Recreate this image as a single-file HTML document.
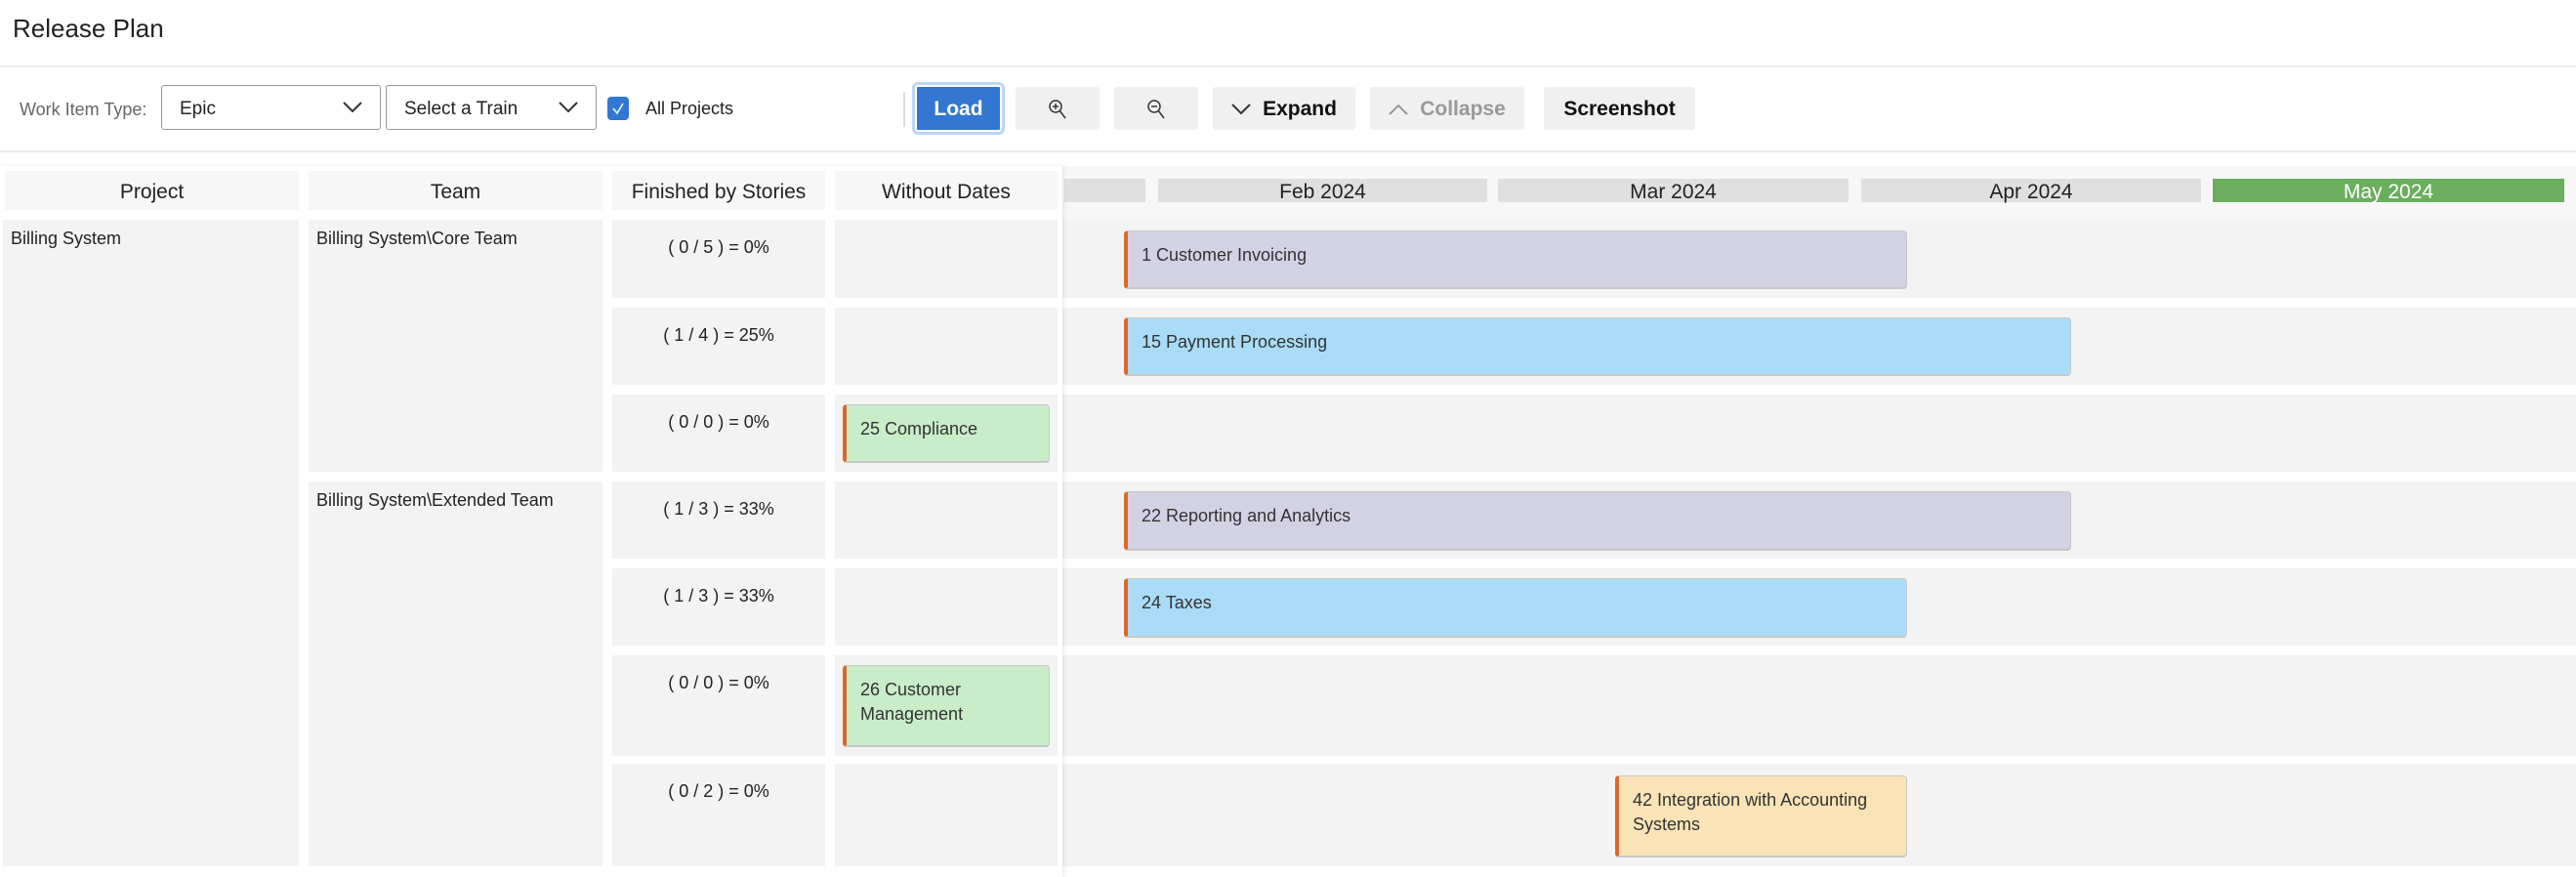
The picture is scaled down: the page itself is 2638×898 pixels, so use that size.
<!DOCTYPE html>
<html><head><meta charset="utf-8"><style>
*{box-sizing:border-box;margin:0;padding:0}
body{width:2638px;height:898px;background:#fff;font-family:"Liberation Sans",Arial,sans-serif;color:#222;position:relative;overflow:hidden}
.a{position:absolute}
.btn{position:absolute;top:89px;height:44px;background:#f0f0f0;border-radius:3px;font-size:21px;font-weight:bold;display:flex;align-items:center;justify-content:center;color:#111;padding-top:2px}
.sel{position:absolute;top:87px;height:46px;border:1.5px solid #999;border-radius:3px;font-size:19px;padding-left:18px;padding-top:4px;display:flex;align-items:center}
.cell{position:absolute;background:#f3f3f3;font-size:18px}
.hd{position:absolute;background:#f7f7f7;font-size:21px;display:flex;align-items:center;justify-content:center;top:175px;height:40px;padding-top:3px}
.mo{position:absolute;top:183px;height:24px;background:#e0e0e0;font-size:21px;display:flex;align-items:center;justify-content:center;padding-top:3px}
.bar{position:absolute;border-left:4px solid #d9692a;border-radius:4px;font-size:18px;padding:12px 0 0 14px;line-height:25px;border-top:1px solid #c8c8c8;border-right:1px solid #c8c8c8;border-bottom:2px solid #c8c8c8;color:#333}
.fin{text-align:center;padding-top:18px}
</style></head><body>
<div class="a" style="left:13px;top:14px;font-size:26px">Release Plan</div>
<div class="a" style="left:0;top:67px;width:2638px;height:2px;background:#ebebeb"></div>
<div class="a" style="left:20px;top:102px;font-size:18px;color:#666">Work Item Type:</div>
<div class="sel" style="left:165px;width:225px">Epic<svg class="a" style="right:18px;top:16px" width="20" height="12"><path d="M1 1L10 10L19 1" fill="none" stroke="#333" stroke-width="2"/></svg></div>
<div class="sel" style="left:395px;width:216px">Select a Train<svg class="a" style="right:18px;top:16px" width="20" height="12"><path d="M1 1L10 10L19 1" fill="none" stroke="#333" stroke-width="2"/></svg></div>
<div class="a" style="left:622px;top:99px;width:22px;height:24px;background:#3277d1;border-radius:4px"><svg width="22" height="24"><path d="M6 12L10 17L16 7" fill="none" stroke="#fff" stroke-width="1.5"/></svg></div>
<div class="a" style="left:661px;top:101px;font-size:18px">All Projects</div>
<div class="a" style="left:925px;top:94px;width:2px;height:36px;background:#ddd"></div>
<div class="btn" style="left:937px;top:87px;width:89px;height:48px;background:#3277d1;color:#fff;border:2px solid #fff;box-shadow:0 0 0 3px #bcd6f5">Load</div>
<div class="btn" style="left:1040px;width:86px"><svg width="20" height="22"><circle cx="8" cy="8" r="6" fill="none" stroke="#333" stroke-width="1.5"/><path d="M12 12L18 20M5 8H11M8 5V11" stroke="#333" stroke-width="1.5"/></svg></div>
<div class="btn" style="left:1141px;width:86px"><svg width="20" height="22"><circle cx="8" cy="8" r="6" fill="none" stroke="#333" stroke-width="1.5"/><path d="M12 12L18 20M5 8H11" stroke="#333" stroke-width="1.5"/></svg></div>
<div class="btn" style="left:1242px;width:146px"><svg width="20" height="12" style="margin-right:12px"><path d="M1 1L10 10L19 1" fill="none" stroke="#333" stroke-width="2"/></svg>Expand</div>
<div class="btn" style="left:1403px;width:158px;color:#999"><svg width="20" height="12" style="margin-right:12px"><path d="M1 11L10 2L19 11" fill="none" stroke="#999" stroke-width="2"/></svg>Collapse</div>
<div class="btn" style="left:1581px;width:155px">Screenshot</div>
<div class="a" style="left:0;top:154px;width:2638px;height:2px;background:#ebebeb"></div>

<div class="a" style="left:1088px;top:170px;width:1550px;height:55px;background:#f7f7f7"></div>
<div class="mo" style="left:1090px;width:83px"></div>
<div class="mo" style="left:1186px;width:337px">Feb 2024</div>
<div class="mo" style="left:1534px;width:359px">Mar 2024</div>
<div class="mo" style="left:1906px;width:348px">Apr 2024</div>
<div class="mo" style="left:2266px;width:360px;background:#6aae5e;color:#fff">May 2024</div>

<div class="cell" style="left:1088px;top:225px;width:1550px;height:80px"></div>
<div class="cell" style="left:1088px;top:315px;width:1550px;height:79px"></div>
<div class="cell" style="left:1088px;top:404px;width:1550px;height:79px"></div>
<div class="cell" style="left:1088px;top:493px;width:1550px;height:79px"></div>
<div class="cell" style="left:1088px;top:582px;width:1550px;height:79px"></div>
<div class="cell" style="left:1088px;top:671px;width:1550px;height:103px"></div>
<div class="cell" style="left:1088px;top:782px;width:1550px;height:105px"></div>

<div class="a" style="left:0;top:170px;width:1088px;height:728px;background:#fff;box-shadow:2px 0 4px rgba(0,0,0,.08)"></div>
<div class="hd" style="left:5px;width:301px">Project</div>
<div class="hd" style="left:316px;width:301px">Team</div>
<div class="hd" style="left:627px;width:218px">Finished by Stories</div>
<div class="hd" style="left:855px;width:228px">Without Dates</div>

<div class="cell" style="left:3px;top:225px;width:303px;height:662px;padding:9px 8px">Billing System</div>
<div class="cell" style="left:316px;top:225px;width:301px;height:258px;padding:9px 8px">Billing System\Core Team</div>
<div class="cell" style="left:316px;top:493px;width:301px;height:394px;padding:9px 8px">Billing System\Extended Team</div>

<div class="cell fin" style="left:627px;top:225px;width:218px;height:80px">( 0 / 5 ) = 0%</div>
<div class="cell fin" style="left:627px;top:315px;width:218px;height:79px">( 1 / 4 ) = 25%</div>
<div class="cell fin" style="left:627px;top:404px;width:218px;height:79px">( 0 / 0 ) = 0%</div>
<div class="cell fin" style="left:627px;top:493px;width:218px;height:79px">( 1 / 3 ) = 33%</div>
<div class="cell fin" style="left:627px;top:582px;width:218px;height:79px">( 1 / 3 ) = 33%</div>
<div class="cell fin" style="left:627px;top:671px;width:218px;height:103px">( 0 / 0 ) = 0%</div>
<div class="cell fin" style="left:627px;top:782px;width:218px;height:105px">( 0 / 2 ) = 0%</div>

<div class="cell" style="left:855px;top:225px;width:228px;height:80px"></div>
<div class="cell" style="left:855px;top:315px;width:228px;height:79px"></div>
<div class="cell" style="left:855px;top:404px;width:228px;height:79px"></div>
<div class="cell" style="left:855px;top:493px;width:228px;height:79px"></div>
<div class="cell" style="left:855px;top:582px;width:228px;height:79px"></div>
<div class="cell" style="left:855px;top:671px;width:228px;height:103px"></div>
<div class="cell" style="left:855px;top:782px;width:228px;height:105px"></div>

<div class="bar" style="left:863px;top:414px;width:212px;height:60px;background:#c9edc8">25 Compliance</div>
<div class="bar" style="left:863px;top:681px;width:212px;height:84px;background:#c9edc8">26 Customer<br>Management</div>
<div class="bar" style="left:1151px;top:236px;width:802px;height:60px;background:#d3d2e4">1 Customer Invoicing</div>
<div class="bar" style="left:1151px;top:325px;width:970px;height:60px;background:#aadcf7">15 Payment Processing</div>
<div class="bar" style="left:1151px;top:503px;width:970px;height:61px;background:#d3d2e4">22 Reporting and Analytics</div>
<div class="bar" style="left:1151px;top:592px;width:802px;height:61px;background:#aadcf7">24 Taxes</div>
<div class="bar" style="left:1654px;top:794px;width:299px;height:84px;background:#f9e3b7">42 Integration with Accounting<br>Systems</div>
</body></html>
